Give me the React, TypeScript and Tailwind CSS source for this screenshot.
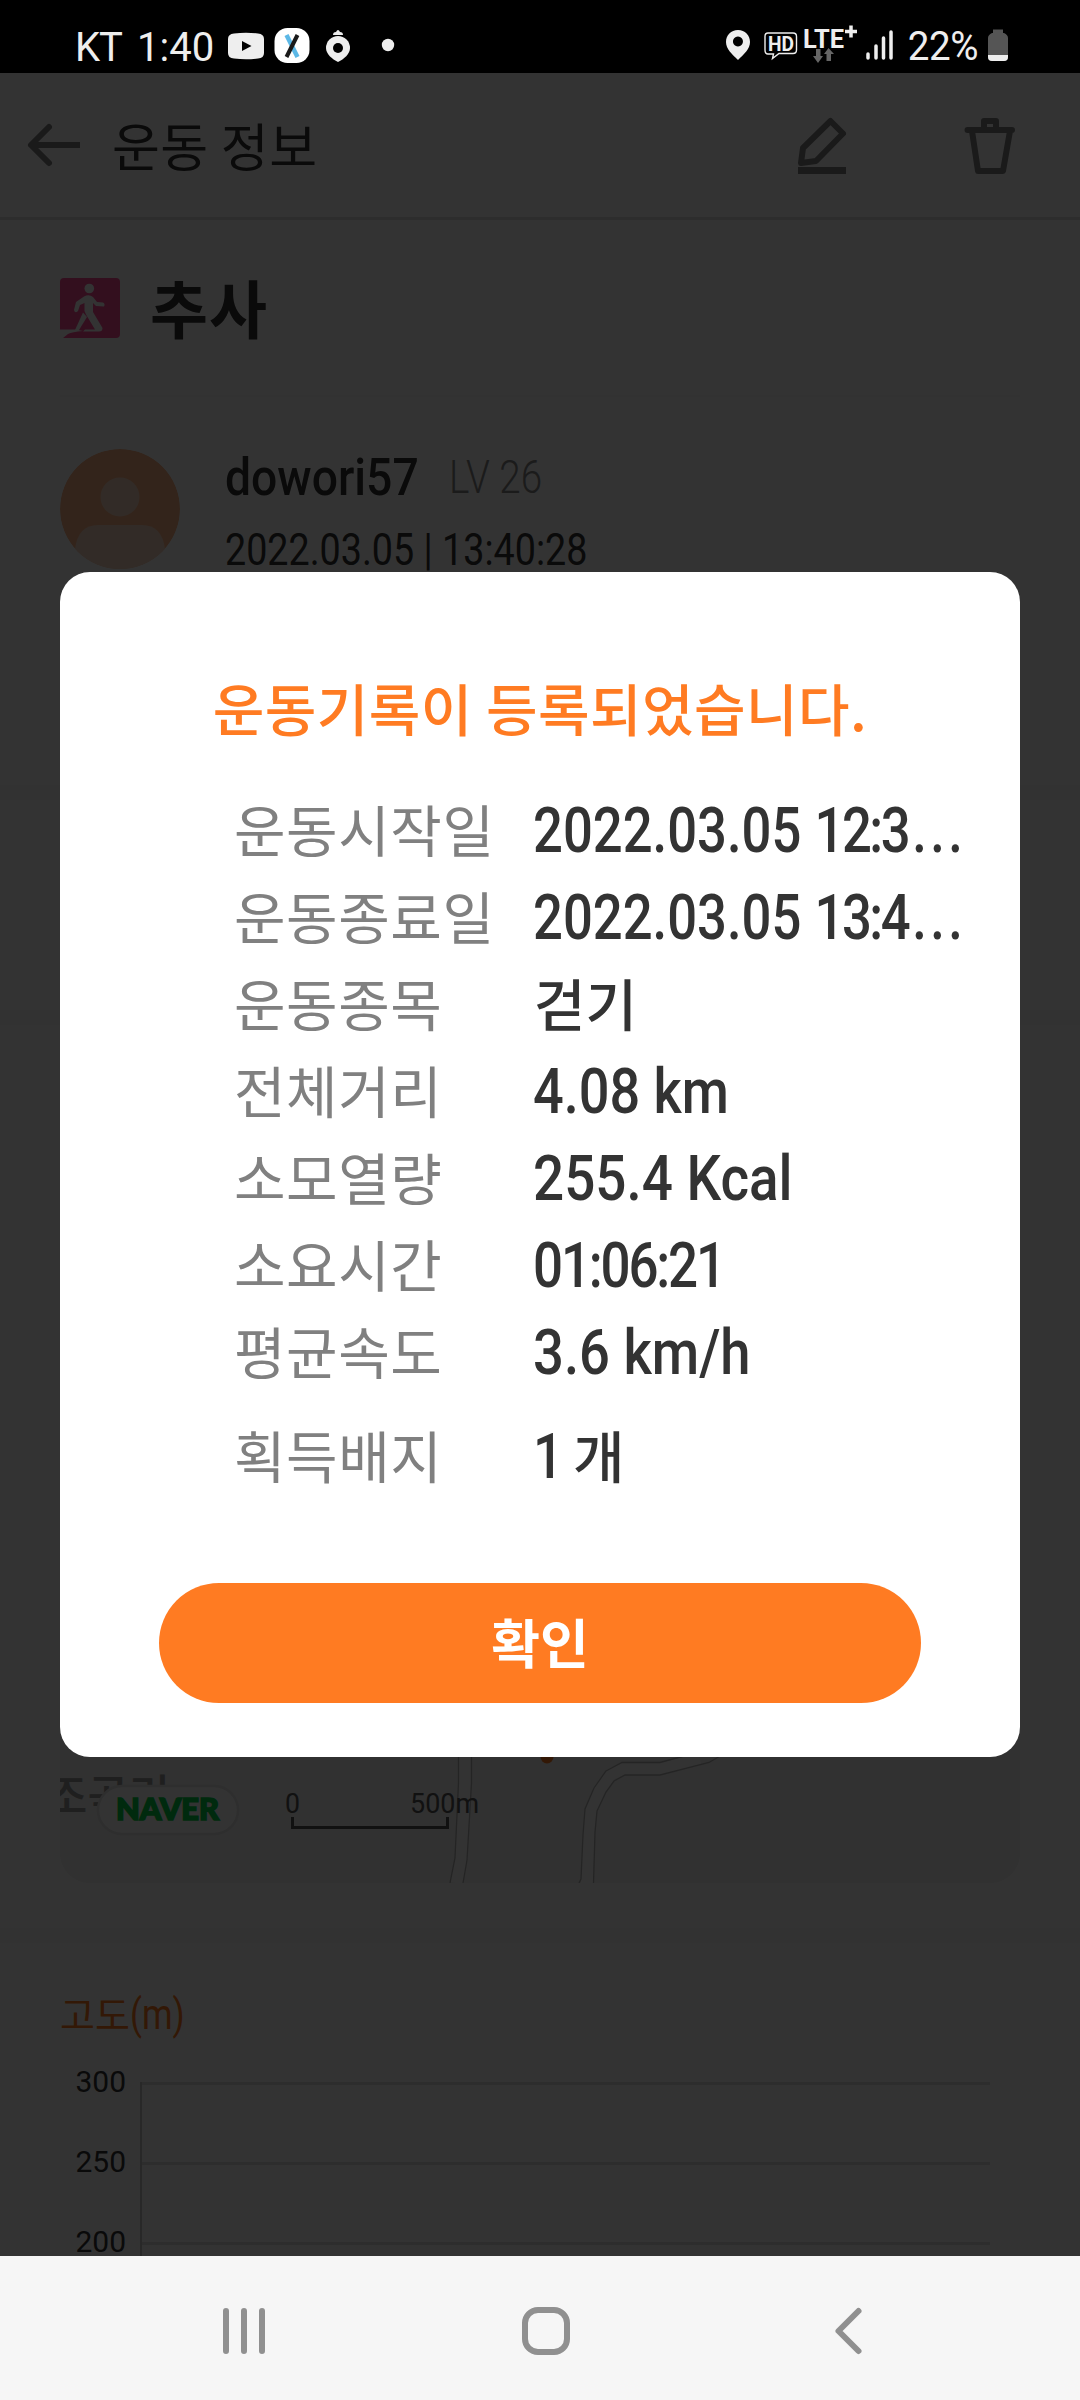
const records = [
  { label: "운동시작일", value: "2022.03.05", time: "12:3", width: "scale-x-[0.835]" },
  { label: "운동종료일", value: "2022.03.05", time: "13:4", width: "scale-x-[0.835]" },
  { label: "운동종목", value: "걷기", korean: true },
  { label: "전체거리", value: "4.08 km", width: "scale-x-[0.858]" },
  { label: "소모열량", value: "255.4 Kcal", width: "scale-x-[0.87]" },
  { label: "소요시간", value: "01:06:21", width: "scale-x-[0.84] tracking-[-2.6px]" },
  { label: "평균속도", value: "3.6 km/h", width: "scale-x-[0.863]" },
];

const altitudes = ["300", "250", "200"];

function StatusBar() {
  return (
    <header className="flex h-[73px] shrink-0 items-start bg-black pl-[75px] font-['Roboto',sans-serif] text-[40px] leading-[47px] text-[#eee]">
      <span className="mt-6 w-[62px] tracking-[-1px]">KT</span>
      <span className="mt-6 w-[91px] whitespace-nowrap">1:40</span>
      <svg className="h-[73px] w-[180px]" viewBox="228 0 180 73">
        <path d="M234 33.5Q246 32 258 33.5Q264 34 264 39V53Q264 58 258 58.500Q246 60 234 58.500Q228 58 228 53V39Q228 34 234 33.500Z" fill="#eee" />
        <path d="M242 41L251.500 46L242 51Z" fill="#000" />
        <rect x="274.500" y="28" width="35" height="35" rx="13" fill="#fff" />
        <path d="M286.500 35L297.500 57" stroke="#5cb8e6" strokeWidth="4.500" />
        <path d="M297.500 35L286.500 57" stroke="#1a1a1a" strokeWidth="4" />
        <path d="M326 48A12 12 0 0 1 350 48C350 54 344 59 338 62C332 59 326 54 326 48Z" fill="#eee" />
        <path d="M333 35Q333 32 336 32Q338 28 340 32Q343 32 343 35Z" fill="#eee" />
        <circle cx="338" cy="48" r="5" fill="#000" />
        <circle cx="388" cy="45" r="6.200" fill="#eee" />
      </svg>
      <svg className="ml-auto h-[73px] w-[185px]" viewBox="720 0 185 73">
        <path fillRule="evenodd" d="M739 30C732 30 727 35 727 42C727 49 733 54 739 60C745 54 751 49 751 42C751 35 746 30 739 30ZM739 36.500A5 5 0 1 1 738.900 36.500Z" fill="#eee" />
        <path d="M769 33H794Q797.500 33 797.500 36.500V50Q797.500 53.500 794 53.500H780L773.500 58.500L774.500 54H769Q766 54 766 50V36.500Q766 33 769 33Z" fill="none" stroke="#eee" strokeWidth="1.400" />
        <text x="769" y="50.500" fontFamily="Roboto" fontWeight="700" fontSize="20" textLength="26" lengthAdjust="spacingAndGlyphs" fill="#eee">HD</text>
        <text x="804" y="47.500" fontFamily="Roboto" fontWeight="700" fontSize="26" textLength="41" lengthAdjust="spacingAndGlyphs" fill="#eee">LTE</text>
        <path d="M846 31.500H858M852 25.500V37.500" stroke="#eee" strokeWidth="3.500" />
        <path d="M817 49H821.500V56H824L819 63L814 56H817ZM827.500 61H832V54H835L829.500 48L825 54H827.500Z" fill="#666" />
        <path d="M869 54V58M877 46V58M884.500 38V58M892 32V58" stroke="#eee" strokeWidth="3.500" strokeLinecap="round" />
      </svg>
      <span className="mt-[23px] w-[83px] origin-left scale-x-[0.94] whitespace-nowrap pl-1 text-[41px] tracking-[-0.5px]">22%</span>
      <svg className="mr-[71px] h-[73px] w-[22px]" viewBox="987 0 22 73">
        <path d="M993 29.500H1003V33H1004Q1008 35 1008 38V57Q1008 61 1004 61H992Q988 61 988 57V38Q988 35 992 33H993Z" fill="#555" />
        <path d="M988 55H1008V57Q1008 61 1004 61H992Q988 61 988 57Z" fill="#eee" />
      </svg>
    </header>
  );
}

function PageHeader() {
  return (
    <div className="flex h-[147px] shrink-0 items-center border-b-3 border-[#e1e1e1] text-[#333]">
      <svg className="h-[144px] w-[112px]" viewBox="0 73 112 144" fill="none" stroke="#828282" strokeWidth="6" strokeLinejoin="round">
        <path d="M49 127L31 145L49 163" strokeLinecap="round" />
        <path d="M31 145H80" />
      </svg>
      <h1 className="text-[52px] leading-[60px] tracking-[0.5px]">운동 정보</h1>
      <svg className="ml-auto h-[144px] w-[290px]" viewBox="790 73 290 144" fill="none" stroke="#828282" strokeWidth="6" strokeLinejoin="round" strokeLinecap="round">
        <path d="M830.500 121L843 133.500L816 161L801 163L803 148Z" />
        <path d="M798 170.500H846" strokeWidth="7" strokeLinecap="butt" />
        <path d="M967.500 130H1012M984 129V121H996V129M972 131L978 171H1003L1010 131" />
      </svg>
    </div>
  );
}

function WalkBadge() {
  return (
    <svg className="size-[60px]" viewBox="60 278 60 60">
      <rect x="60" y="278" width="60" height="60" rx="4" fill="#ff4b96" />
      <path d="M60 329.500H76L83 331Q72 332 68 334L63 338H60Z" fill="#fff" />
      <circle cx="89.300" cy="288.500" r="4.800" fill="#fff" />
      <path d="M84 296.500Q89 294 93 297L97 302L103 302.500Q105.500 304 104 306.500L96 306L93 303V312L102.500 328Q102.500 331.500 99 331.500H83L85 329.500H95L86 314.500L84.500 311V303L80 305L78 311Q75 314 74 310L76 302Z" fill="#fff" />
      <path d="M83 312.500L87 317L79 330H75Z" fill="#fff" />
    </svg>
  );
}

function MapPanel() {
  return (
    <svg className="mx-[60px] block h-[858px] w-[960px] rounded-[30px]" viewBox="60 1025 960 858">
      <rect x="60" y="1025" width="960" height="858" fill="#f2f2f2" />
      <path d="M464.500 1700V1790L461 1860L456.500 1883M587 1883L590 1814L599 1790L611 1774L624 1769H660L700 1759" fill="none" stroke="#fff" strokeWidth="12" />
      <path
        d="M458.500 1700V1783L455 1858L450 1883M471.500 1700V1783L467 1860L463 1883M579 1883L581 1879L583 1835L585 1809L594 1788L606 1771L622 1762.500H660L684 1756M593.500 1883L595 1832L597 1811L606 1792L614 1781L625 1775H660L709 1762.500L720 1756"
        fill="none"
        stroke="#b4b4b4"
        strokeWidth="1.300"
      />
      <circle cx="547" cy="1757" r="6.500" fill="#ff7b22" />
      <text x="46" y="1813" fontSize="45" fontWeight="500" fill="#999">조곡리</text>
      <rect x="98" y="1786" width="140" height="48" rx="24" fill="#fff" stroke="#e4e4e4" strokeWidth="2.500" />
      <text x="116" y="1820" fontFamily="Lato" fontWeight="900" fontSize="30" textLength="103" lengthAdjust="spacingAndGlyphs" fill="#00d246" stroke="#00d246" strokeWidth="1.600">NAVER</text>
      <g fontFamily="Roboto" fontSize="28" fill="#555">
        <text x="285" y="1813" textLength="15" lengthAdjust="spacingAndGlyphs">0</text>
        <text x="410" y="1813" textLength="69" lengthAdjust="spacingAndGlyphs">500m</text>
      </g>
      <path d="M292.500 1817V1827.500H447.500V1817" fill="none" stroke="#555" strokeWidth="3" />
    </svg>
  );
}

function ResultDialog() {
  return (
    <div className="absolute top-[572px] left-[60px] flex h-[1185px] w-[960px] flex-col rounded-[30px] bg-white">
      <h2 className="mt-[95px] text-center text-[56px] leading-[80px] font-medium tracking-[0.5px] text-[#ff7b22]">운동기록이 등록되었습니다.</h2>
      <dl className="mt-[40px] pl-[174px] leading-[87px]">
        {records.map((record) => (
          <div key={record.label} className="flex h-[87px]">
            <dt className="-mt-[3px] w-[299px] shrink-0 text-[56px] tracking-[0.6px] text-[#808080]">{record.label}</dt>
            {record.korean ? (
              <dd className="-mt-[3px] pl-px text-[56px] font-medium text-[#333]">{record.value}</dd>
            ) : (
              <dd className={`origin-left font-['Roboto',sans-serif] text-[63px] font-medium whitespace-nowrap text-[#333] ${record.width}`}>
                {record.value}
                {record.time && (
                  <>
                    {" "}
                    <span className="tracking-[-3px]">{record.time}</span>
                    <span className="pl-[5px] tracking-[4px]">...</span>
                  </>
                )}
              </dd>
            )}
          </div>
        ))}
        <div className="mt-[17px] flex h-[87px]">
          <dt className="-mt-[3px] w-[299px] shrink-0 text-[56px] tracking-[0.6px] text-[#808080]">획득배지</dt>
          <dd className="flex text-[56px] font-medium text-[#333]">
            <span className="w-[40px] origin-left scale-x-[0.845] font-['Roboto',sans-serif] text-[63px]">1</span>
            <span className="-mt-[3px]">개</span>
          </dd>
        </div>
      </dl>
      <button className="mt-auto mb-[54px] ml-[99px] h-[120px] w-[762px] rounded-full bg-[#ff7b22] pb-[2px] text-[53px] font-bold text-white">확인</button>
    </div>
  );
}

function NavigationBar() {
  return (
    <nav className="h-36 shrink-0 bg-[#f6f6f6]">
      <svg className="h-36 w-full" viewBox="0 2256 1080 144" fill="none" stroke="#909090" strokeWidth="6" strokeLinecap="round">
        <path d="M226 2311V2351M244 2311V2351M262 2311V2351" />
        <rect x="525" y="2310" width="42" height="42" rx="13" />
        <path d="M858.500 2311L838.500 2331L858.500 2351" strokeLinejoin="round" />
      </svg>
    </nav>
  );
}

export default function App() {
  return (
    <div className="relative flex h-[2400px] w-[1080px] flex-col overflow-hidden bg-white font-['Noto_Sans_CJK_KR',sans-serif]">
      <StatusBar />

      <main className="relative flex h-[2183px] shrink-0 flex-col overflow-hidden">
        <PageHeader />
        <div className="mx-[60px] flex h-[177px] shrink-0 items-center gap-[30px] border-b-2 border-[#f8f8f8]">
          <WalkBadge />
          <h2 className="pb-[3px] text-[63px] leading-[72px] font-bold tracking-[1px] text-[#333]">추사</h2>
        </div>
        <div className="flex h-[388px] shrink-0 pt-[52px] pl-[60px]">
          <svg className="size-[120px] rounded-full" viewBox="0 0 120 120">
            <circle cx="60" cy="60" r="60" fill="#ffb487" />
            <circle cx="60" cy="48" r="19.500" fill="#fad7c3" />
            <path d="M15 100Q18 76 38 76H82Q102 76 105 100V120H15Z" fill="#fad7c3" />
          </svg>
          <div className="ml-[45px] font-['Roboto',sans-serif] whitespace-nowrap text-[#333]">
            <div className="flex h-[73px] items-start leading-[60px]">
              <span className="-mt-px w-[224px] origin-left scale-x-[0.89] text-[52px] font-medium">dowori57</span>
              <span className="-mt-[2px] origin-left scale-x-[0.84] text-[46px] font-light text-[#888]">LV 26</span>
            </div>
            <div className="origin-left scale-x-[0.837] text-[45px] leading-[56px]">2022.03.05 | 13:40:28</div>
          </div>
        </div>
        <div className="h-[15px] shrink-0 bg-[#f8f8f8]" />
        <div className="h-[210px] shrink-0" />
        <div className="h-[15px] shrink-0 bg-[#f8f8f8]" />
        <div className="h-[903px] shrink-0">
          <MapPanel />
        </div>
        <div className="h-[15px] shrink-0 bg-[#f8f8f8]" />
        <h3 className="mt-[44px] ml-[60px] h-[62px] shrink-0 text-[38px] leading-[52px] text-[#ff7b22]">
          고도<span className="inline-block origin-left scale-x-[0.83] font-['Roboto',sans-serif] text-[42px]">(m)</span>
        </h3>
        <div className="flex shrink-0 pt-[33px] pr-[90px]">
          <ul className="-mt-[17px] w-[126px] text-right font-['Roboto',sans-serif] text-[30px] leading-[34px] text-[#333]">
            {altitudes.map((altitude) => (
              <li key={altitude} className="h-[80px]">{altitude}</li>
            ))}
          </ul>
          <div className="ml-[14px] flex-1 border-l-2 border-[#c8c8c8]">
            {altitudes.map((altitude) => (
              <div key={altitude} className="h-[80px] border-t-3 border-[#e1e1e1]" />
            ))}
          </div>
        </div>
        <div className="absolute inset-0 bg-black/80" />
      </main>

      <ResultDialog />
      <NavigationBar />
    </div>
  );
}
